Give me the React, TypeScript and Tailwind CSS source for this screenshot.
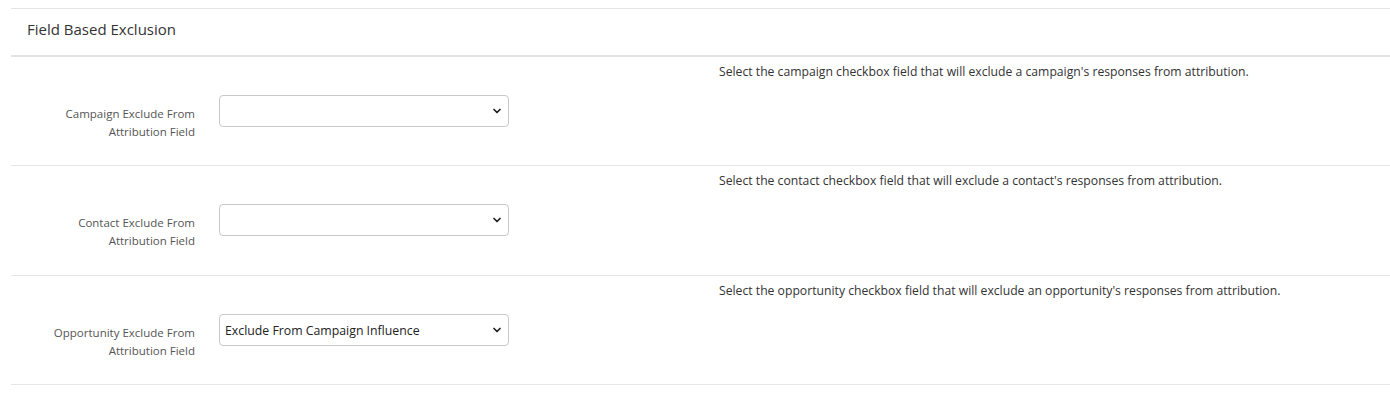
import { ChevronDown } from "lucide-react";

const ROWS = [
    {
        label: ["Campaign Exclude From", "Attribution Field"],
        value: "",
        help: "Select the campaign checkbox field that will exclude a campaign's responses from attribution.",
    },
    {
        label: ["Contact Exclude From", "Attribution Field"],
        value: "",
        help: "Select the contact checkbox field that will exclude a contact's responses from attribution.",
    },
    {
        label: ["Opportunity Exclude From", "Attribution Field"],
        value: "Exclude From Campaign Influence",
        help: "Select the opportunity checkbox field that will exclude an opportunity's responses from attribution.",
    },
];

export default function App() {
    return (
        <div className="bg-white w-[1390px] h-[395px] pt-[8px] pl-[11px] font-['Open_Sans',sans-serif] text-[#333]">
            {/* Section header */}
            <div className="border-t border-[#e5e5e5] h-[49px] border-b-2 border-b-[#e3e3e3] pl-[16px] pb-[6px] flex items-center">
                <h3 className="text-[15px] text-[#333] leading-none">Field Based Exclusion</h3>
            </div>

            {ROWS.map((row, index) => (
                <div key={index} className={`flex border-b border-[#e6e6e6] ${index === 1 ? "h-[110px]" : "h-[109px]"}`}>
                    {/* Label */}
                    <div className="w-[184px] pt-[48px] text-right text-[11.5px] leading-[18px] text-[#555]">
                        {row.label.map((line) => (
                            <div key={line}>{line}</div>
                        ))}
                    </div>

                    {/* Select */}
                    <div className="ml-[24px] pt-[38px]">
                        <div className="w-[290px] h-[32px] border border-[#c8c8c8] rounded-[4px] flex items-center justify-between pl-[5px] pr-[5px] pt-[3px] text-[12.3px] text-[#222]">
                            <span>{row.value}</span>
                            <ChevronDown className="w-[12px] h-[12px] text-[#222] -mt-[3px]" strokeWidth={3.5} />
                        </div>
                    </div>

                    {/* Help text */}
                    <div className="ml-[210px] pt-[6px] text-[12.2px] leading-[18px] text-[#333]">
                        {row.help}
                    </div>
                </div>
            ))}
        </div>
    );
}
